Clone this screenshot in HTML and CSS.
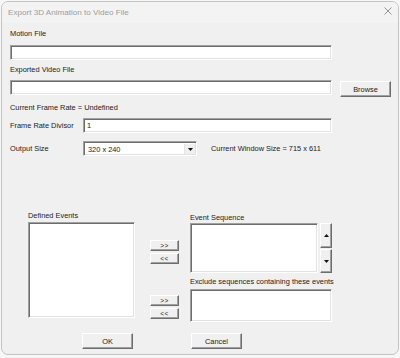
FILE: index.html
```html
<!DOCTYPE html>
<html>
<head>
<meta charset="utf-8">
<link rel="stylesheet" href="styles.css">
</head>
<body>
<div class="window">
  <div class="titlebar">
    <span class="title">Export 3D Animation to Video File</span>
    <svg class="close" width="8" height="8" viewBox="0 0 8 8"><path d="M0.5 0.5L7.5 7.5M7.5 0.5L0.5 7.5" stroke="#8a8a8a" stroke-width="0.9" fill="none"/></svg>
  </div>
  <div class="content">
    <div class="label l-motion">Motion File</div>
    <div class="field wide f-motion"></div>
    <div class="label l-video">Exported Video File</div>
    <div class="row row-video">
      <div class="field wide"></div>
      <div class="btn browse">Browse</div>
    </div>
    <div class="label l-rate">Current Frame Rate = Undefined</div>
    <div class="row row-divisor">
      <span class="rowlabel">Frame Rate Divisor</span>
      <div class="field divisor">1</div>
    </div>
    <div class="row row-size">
      <span class="rowlabel">Output Size</span>
      <div class="field select"><span class="seltext">320 x 240</span><span class="drop"><svg width="5" height="3" viewBox="0 0 5 3"><path d="M0 0H5L2.5 3Z" fill="#111"/></svg></span></div>
      <span class="winsize">Current Window Size = 715 x 611</span>
    </div>
    <div class="events">
      <div class="col col-defined">
        <div class="label l-defined">Defined Events</div>
        <div class="field list defined"></div>
      </div>
      <div class="col col-move">
        <div class="pair">
          <div class="btn small">&gt;&gt;</div>
          <div class="btn small">&lt;&lt;</div>
        </div>
        <div class="pair pair2">
          <div class="btn small">&gt;&gt;</div>
          <div class="btn small">&lt;&lt;</div>
        </div>
      </div>
      <div class="col col-seq">
        <div class="label l-seq">Event Sequence</div>
        <div class="seqrow">
          <div class="field list seq"></div>
          <div class="updown">
            <div class="btn arrow up"><svg width="5" height="3" viewBox="0 0 5 3"><path d="M0 3H5L2.5 0Z" fill="#111"/></svg></div>
            <div class="btn arrow down"><svg width="5" height="3" viewBox="0 0 5 3"><path d="M0 0H5L2.5 3Z" fill="#111"/></svg></div>
          </div>
        </div>
        <div class="label l-exclude">Exclude sequences containing these events</div>
        <div class="field list exclude"></div>
      </div>
    </div>
    <div class="actions">
      <div class="btn action">OK</div>
      <div class="btn action">Cancel</div>
    </div>
  </div>
</div>
</body>
</html>
```

FILE: styles.css
```css
* { box-sizing: border-box; }
html, body { margin: 0; padding: 0; }
body {
  background: #f7f7f7;
  width: 400px;
  height: 358px;
  overflow: hidden;
  font-family: "Liberation Sans", Arial, sans-serif;
  font-size: 7.4px;
  color: #1a1a1a;
}
.window {
  margin: 1px 0 0 1px;
  width: 398px;
  height: 354px;
  border: 1px solid #c4c4c4;
  border-radius: 7px;
  background: #f0f0f0;
  overflow: hidden;
}
.titlebar {
  height: 21px;
  background: #f3f3f3;
  display: flex;
  align-items: center;
  justify-content: space-between;
  padding: 0 6px 0 6px;
}
.title {
  font-size: 8.1px;
  color: #9c9c9c;
}
.close { display: block; margin-top: -4px; }
.content {
  padding-left: 8px;
}
.label {
  line-height: 10px;
  height: 10px;
  white-space: nowrap;
}
.field {
  background: #fff;
  border: 1px solid;
  border-color: #a0a0a0 #ffffff #ffffff #a0a0a0;
  box-shadow: inset 1px 1px 0 #6d6d6d, inset -1px -1px 0 #e3e3e3;
  height: 15px;
}
.wide { width: 322px; }
.l-motion { margin-top: 6px; }
.f-motion { margin-top: 6px; }
.l-video { margin-top: 5px; }
.row { display: flex; align-items: flex-start; }
.row-video { margin-top: 5px; }
.btn {
  background: #f0f0f0;
  border: 1px solid;
  border-color: #ffffff #6d6d6d #6d6d6d #ffffff;
  box-shadow: inset -1px -1px 0 #a0a0a0;
  display: flex;
  align-items: center;
  justify-content: center;
  color: #1a1a1a;
}
.browse {
  margin-left: 8px;
  margin-top: 1px;
  width: 51px;
  height: 16px;
}
.l-rate { margin-top: 6px; }
.row-divisor { margin-top: 5px; align-items: center; }
.rowlabel {
  width: 73px;
  line-height: 10px;
  white-space: nowrap;
}
.divisor {
  width: 249px;
  padding-left: 3px;
  line-height: 13px;
}
.row-size { margin-top: 8px; align-items: center; }
.select {
  width: 114px;
  display: flex;
  align-items: stretch;
  justify-content: space-between;
  padding: 2px 1px 1px 4px;
}
.seltext { line-height: 11px; }
.drop {
  width: 11px;
  background: #f0f0f0;
  border-left: 1px solid #e3e3e3;
  display: flex;
  align-items: center;
  justify-content: center;
}
.drop svg, .arrow svg { display: block; }
.winsize {
  margin-left: 14px;
  line-height: 10px;
  white-space: nowrap;
}
.events {
  display: flex;
  align-items: flex-start;
  margin-top: 55px;
}
.col-defined {
  margin-left: 18px;
  width: 107px;
}
.l-defined { margin-bottom: 1px; }
.defined { height: 96px; }
.col-move {
  margin-left: 15px;
  width: 29px;
  padding-top: 29px;
}
.pair { display: flex; flex-direction: column; gap: 2px; }
.pair2 { margin-top: 31px; }
.small {
  height: 11px;
  font-size: 6.5px;
  letter-spacing: 0.5px;
  line-height: 9px;
}
.col-seq {
  margin-left: 11px;
  width: 142px;
}
.l-seq { margin-top: 2px; line-height: 9px; height: 9px; margin-bottom: 1px; }
.seqrow { display: flex; gap: 2px; }
.seq { width: 128px; height: 50px; }
.updown { display: flex; flex-direction: column; gap: 1px; }
.arrow { width: 12px; height: 25px; }
.arrow.down { height: 24px; }
.l-exclude { margin-top: 4px; margin-bottom: 2px; }
.exclude { width: 142px; height: 33px; }
.actions {
  display: flex;
  gap: 58px;
  padding-left: 72px;
  margin-top: 11px;
}
.action {
  width: 51px;
  height: 16px;
}
```
